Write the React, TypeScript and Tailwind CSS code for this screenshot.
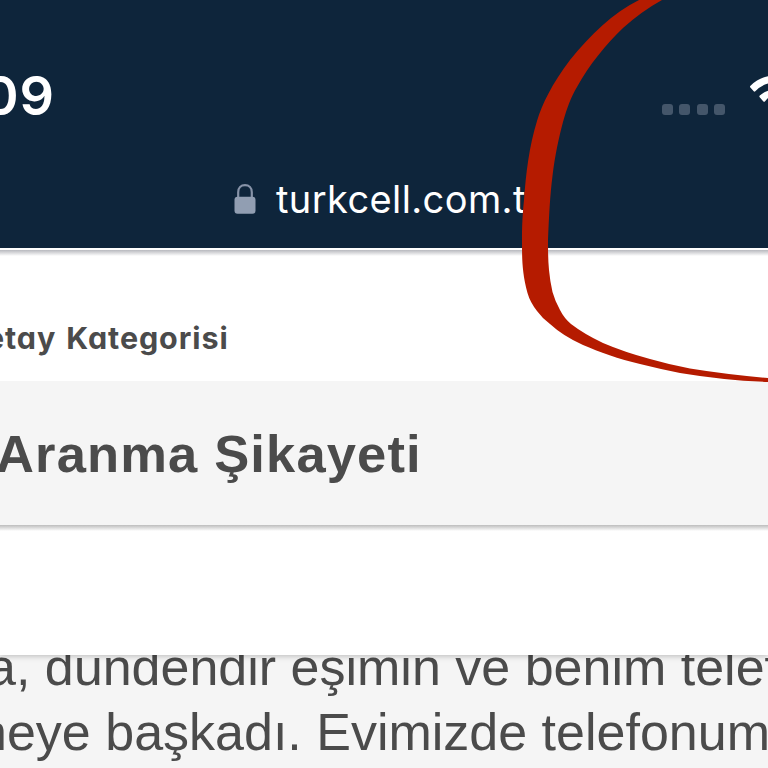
function LockIcon() {
  return (
    <svg className="h-[30px] w-[22px] shrink-0" viewBox="0 0 22 30" fill="none">
      <path d="M4.2 14V8.2C4.2 3.900 7 1.200 11 1.200s6.800 2.700 6.800 7V14" stroke="#8793a8" strokeWidth="2.2" />
      <rect x="0.5" y="12.7" width="21" height="17" rx="3" fill="#919eb2" />
    </svg>
  );
}

function SignalDots() {
  return (
    <div className="flex gap-[6.4px]">
      {[0, 1, 2, 3].map((n) => (
        <span key={n} className="h-[11px] w-[11px] rounded-[3px] bg-[#44566a]" />
      ))}
    </div>
  );
}

function WifiIcon() {
  return (
    <svg className="h-[36px] w-[20px] shrink-0" viewBox="0 0 20 36">
      <path d="M2.400 11.600Q1.500 10.700 2.500 9.700Q10.500 2 20 .3V7.500Q12.500 9.500 7.300 15.300Q6.500 16 5.700 15.200Z" fill="#fff" />
      <path d="M11.700 21.200Q10.900 20.500 11.800 19.600Q15.500 16 20 14.700V22Q18.300 23.600 16.900 25.600Q16.200 26.200 15.400 25.400Z" fill="#fff" />
    </svg>
  );
}

function Annotation() {
  return (
    <svg className="pointer-events-none absolute inset-0 z-30 h-[768px] w-[768px]" viewBox="0 0 768 768">
      <path
        fill="#b51b00"
        d="M639 0C613 13 590 35 570 60C552 84 542 104 537 121C529 147 526 173 524 200C522 220 522 230 522 242C522 258 522 273 527.500 293Q530 302 537 311Q542 318 550 324Q563 336 583 345C599 352 619 359 640 364Q660 369 680 373Q725 380.500 768 382V378Q727 374.500 690 368.500Q669 364.500 650 359Q624 352 603 343Q584 334 571 324Q564 318 560 310Q555 301 552.500 292Q550 281 549 270C548 260 548 248 548 240C549 217 550 195 552.500 176C555 155 559 137 563 122C567 108 571 97 577 87C589 65 607 43 623 28Q642 11 662 0Z"
      />
    </svg>
  );
}

export default function App() {
  return (
    <div className="relative flex h-[768px] w-[768px] flex-col overflow-hidden bg-white font-['Liberation_Sans',sans-serif] text-[#4b4b4b]">
      <header className="flex h-[248px] shrink-0 flex-col bg-[#0e253b] font-[Inter,sans-serif] text-white">
        <div className="flex h-[160px] items-start pt-[63px]">
          <div className="-ml-[17px] w-[679px] text-[54px] leading-[66px] font-semibold tracking-[0.8px]">09</div>
          <div className="pt-[41px]">
            <SignalDots />
          </div>
          <div className="ml-auto pt-[13px]">
            <WifiIcon />
          </div>
        </div>
        <div className="flex h-[78px] items-center gap-[20px] pl-[234px]">
          <LockIcon />
          <span className="text-[38px] leading-[46px] tracking-[0.4px] whitespace-nowrap">turkcell.com.tr</span>
        </div>
      </header>
      <section className="relative h-[133px] shrink-0 bg-white pt-[71px]">
        <div className="absolute inset-x-0 top-[2px] h-[6px] bg-linear-to-b from-[#b8b9be] to-white" />
        <div className="-ml-[14px] font-[Inter,sans-serif] text-[30.5px] leading-[38px] font-bold tracking-[0.9px] [word-spacing:2px] whitespace-nowrap [font-feature-settings:'cv11']">
          etay Kategorisi
        </div>
      </section>
      <section className="h-[144px] shrink-0 bg-[#f5f5f5] pt-[42px]">
        <h1 className="-ml-[4px] text-[52.5px] leading-[61px] font-bold tracking-[1.15px] whitespace-nowrap">
          Aranma Şikayeti
        </h1>
      </section>
      <section className="relative z-10 h-[130px] shrink-0 bg-linear-to-b from-[#bdbdbd] via-white via-[6px] to-white shadow-[0_1px_6px_rgba(0,0,0,0.25)] [clip-path:inset(0_0_-8px_0)]" />
      <main className="h-[113px] shrink-0 bg-[#f5f5f5] text-[52px] leading-[65px] whitespace-nowrap">
        <p className="-mt-[20px] -ml-[13px]">a, dündendir eşimin ve benim telefonuma</p>
        <p className="-ml-[22px]">neye başkadı. Evimizde telefonumuz</p>
      </main>
      <Annotation />
    </div>
  );
}
